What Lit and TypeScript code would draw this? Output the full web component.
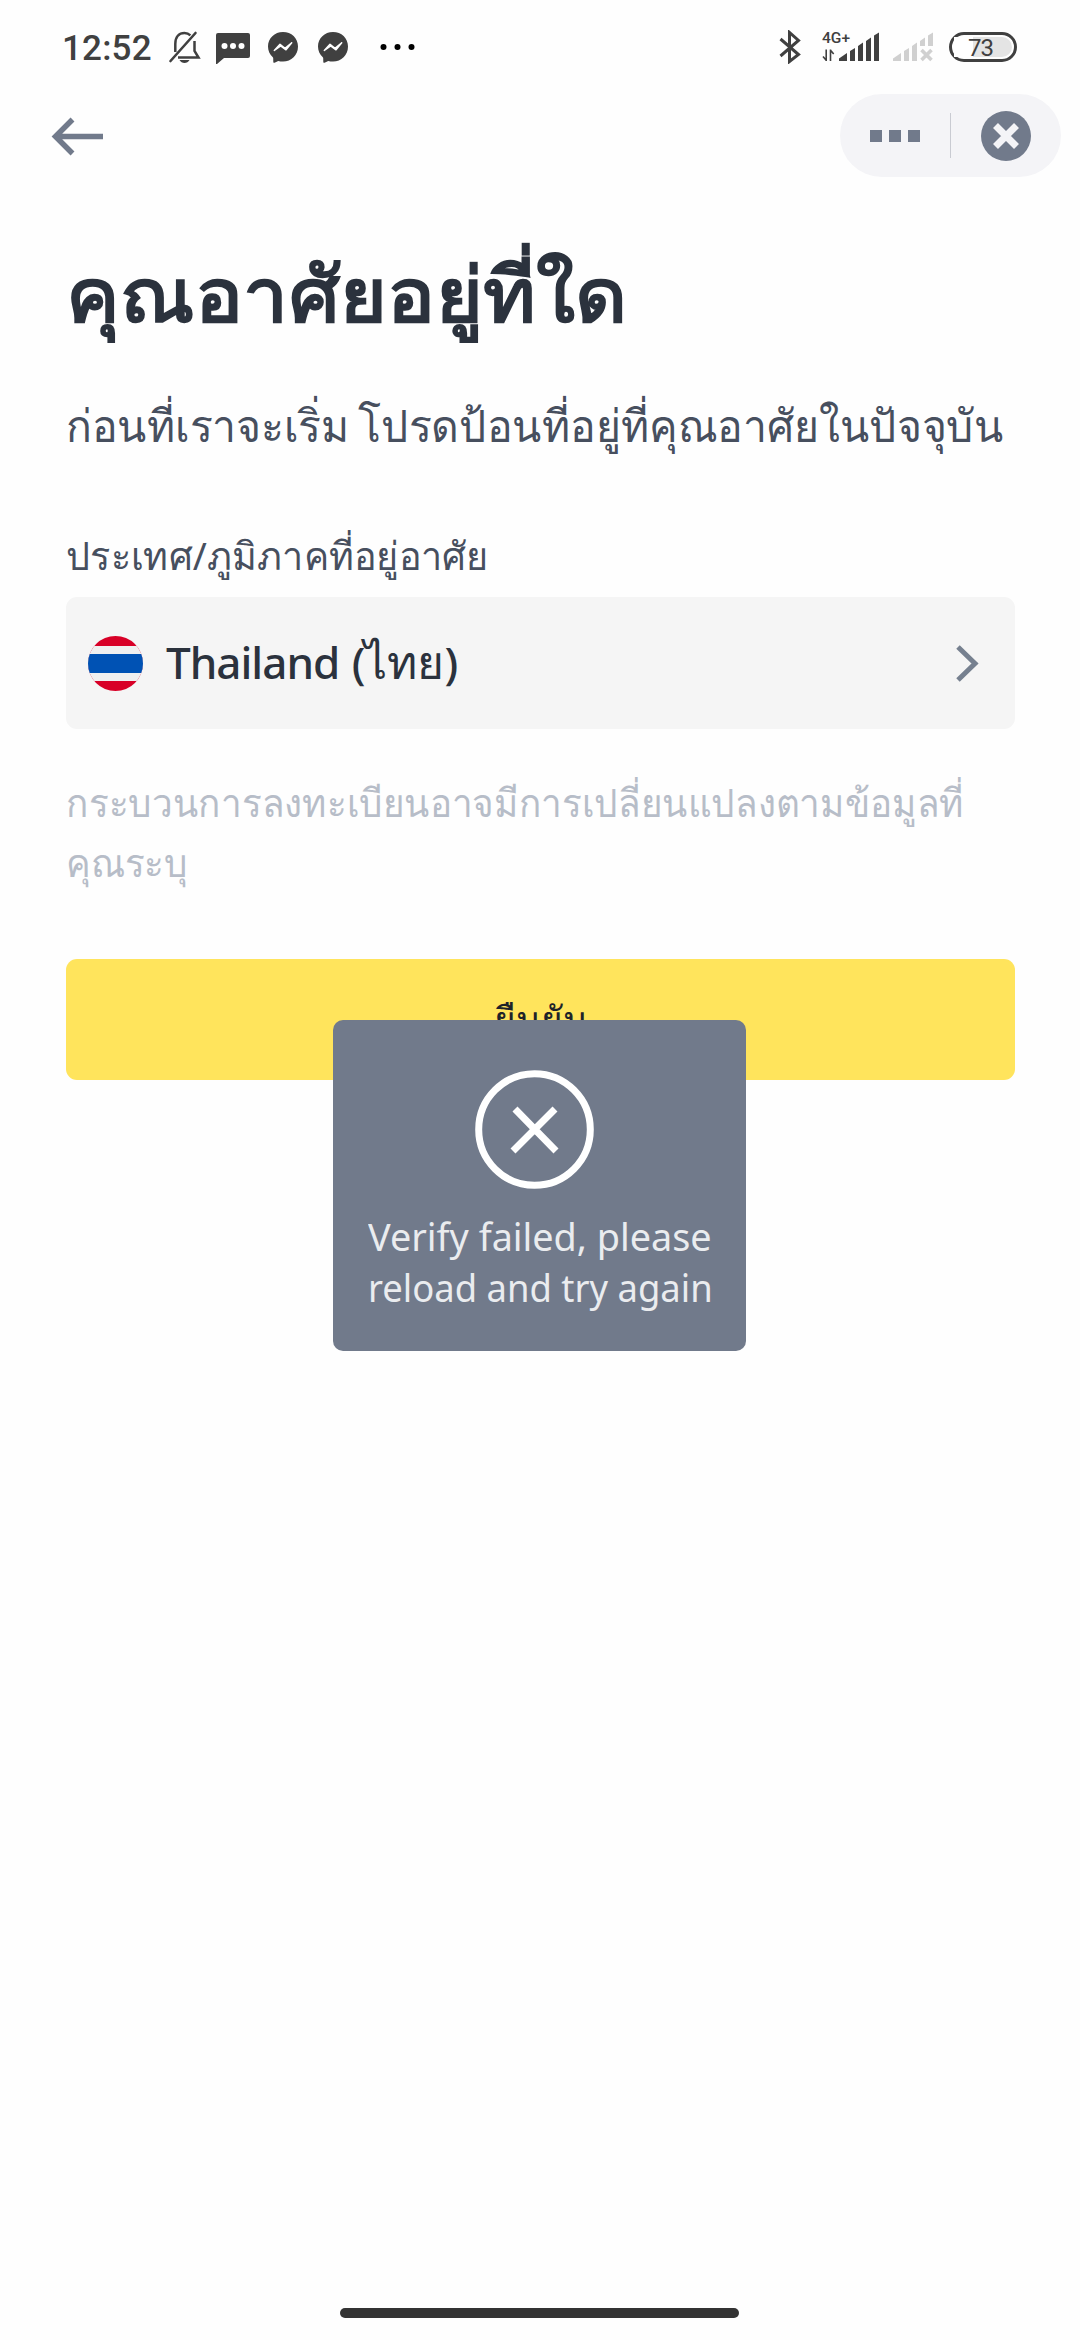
import { LitElement, html, css, svg } from "lit";
import { customElement } from "lit/decorators.js";

const messenger = () => html`
  <svg class="messenger" width="30" height="31" viewBox="0 0 30 31">
    <path fill="#404040" d="M15 0C6.600 0 0 6.200 0 14.600c0 4.300 1.800 8.100 4.800 10.700.3.300.4.600.4 1l.1 3.600c0 .7.700 1.100 1.300.8l3.600-1.700c1.500.4 3.100.6 4.800.6 8.400 0 15-6.300 15-15S23.400 0 15 0Z"/>
    <path d="M6.300 18.400 12 12.300l5 4.100 6.700-5.600-5.700 7-5.300-3.900Z" fill="#fff" stroke="#fff" stroke-width="1.500" stroke-linejoin="round"/>
  </svg>`;

@customElement("status-bar")
export class StatusBar extends LitElement {
  static styles = css`
    :host { display: flex; align-items: center; height: 94px; box-sizing: border-box; padding: 0 63px 0 62px; font-family: Roboto, "Noto Sans", sans-serif; color: #404040; }
    svg { display: block; flex: none; }
    .time { font-size: 35px; line-height: 40px; font-weight: 500; width: 106px; letter-spacing: 0.2px; white-space: nowrap; margin-top: 3px; }
    .bell { margin-right: 15px; }
    .chat { margin: 2px 18px 0 0; }
    .messenger { margin-right: 20px; }
    .more { margin-left: 12px; }
    .right { display: flex; align-items: center; margin-left: auto; }
    .bluetooth { margin-right: 20px; }
    .network { width: 58px; height: 32px; margin-right: 12px; overflow: visible; }
    .tag { font: 500 15px Roboto, sans-serif; }
    .sim { margin-right: 16px; }
    .battery { box-sizing: border-box; width: 68px; height: 30px; border: 3px solid #404040; border-radius: 15px; display: flex; padding: 2px; font-size: 24px; line-height: 24px; letter-spacing: -1px; }
    .level { box-sizing: border-box; width: 58px; height: 20px; border-radius: 0 10px 10px 0; background: linear-gradient(90deg, #fff 19px, #e4e4e4 19px); padding-left: 14px; line-height: 22px; }
  `;
  render() {
    return html`
      <span class="time">12:52</span>
      <svg class="bell" width="33" height="34" viewBox="0 0 33 34" fill="none" stroke="#404040">
        <path d="M27.500 3 2.500 31" stroke-width="2.600" stroke-linecap="round"/>
        <path d="M7.300 22V14C7.300 7 11 3 16.500 3c2.500 0 4.400.9 5.900 2.300M26.500 11V21l4 6.500H10" stroke-width="2.500"/>
        <path d="M11.500 30h10c-1 2-3 2.900-5 2.900s-4-.9-5-2.900Z" fill="#404040" stroke="none"/>
      </svg>
      <svg class="chat" width="34" height="31" viewBox="0 0 34 31">
        <path fill="#404040" d="M2 0h30q2 0 2 2v21q0 2-2 2H8L1 31H0V2q0-2 2-2Z"/>
        <circle cx="8.500" cy="13" r="3" fill="#fff"/><circle cx="17" cy="13" r="3" fill="#fff"/><circle cx="25.500" cy="13" r="3" fill="#fff"/>
      </svg>
      ${messenger()}${messenger()}
      <svg class="more" width="36" height="8" viewBox="0 0 36 8">
        <circle cx="3.500" cy="4" r="3"/><circle cx="17.500" cy="4" r="3"/><circle cx="31.500" cy="4" r="3"/>
      </svg>
      <div class="right">
        <svg class="bluetooth" width="22" height="34" viewBox="0 0 22 34" fill="none" stroke="#404040" stroke-width="3">
          <path d="M1.500 9 19.500 24.500 10.500 31.500V2.500l9 8L1.500 26"/>
        </svg>
        <svg class="network" viewBox="0 0 58 32" fill="#404040">
          <text class="tag" x="1" y="12" textLength="28" lengthAdjust="spacingAndGlyphs">4G+</text>
          <path d="M5.200 30V18.500M5.200 29.300 2 25.500M9.500 30V18.500M9.500 19.200l3.200 3.800" fill="none" stroke="#404040" stroke-width="1.600"/>
          <path d="M18 30v-2.500l8-5.500v8ZM29 30V20l5-3v13ZM37 30V15l5-3.500V30ZM45 30V10l5-3.500V30ZM53 30V4.500l5-3V30Z"/>
        </svg>
        <svg class="sim" width="42" height="32" viewBox="0 0 42 32" fill="#d0d0d0">
          <path d="M2 30v-2.500l8-5.500v8ZM13 30V20l5-3v13ZM21 30V15l5-3.500V30ZM29 15V10l5-3.500V15ZM37 15V4.500l5-3V15Z"/>
          <path d="m30.500 19 10 10M40.500 19l-10 10" stroke="#d0d0d0" stroke-width="3.600"/>
        </svg>
        <div class="battery"><div class="level">73</div></div>
      </div>`;
  }
}

@customElement("nav-bar")
export class NavBar extends LitElement {
  static styles = css`
    :host { display: flex; justify-content: space-between; height: 83px; padding: 0 19px 0 50px; }
    svg { display: block; }
    .back { align-self: center; }
    .capsule { display: flex; align-items: center; width: 221px; height: 83px; border-radius: 42px; background: #f4f4f7; box-sizing: border-box; padding: 0 30px; }
    .dots { display: flex; gap: 7px; width: 80px; }
    .dot { width: 12px; height: 12px; background: #717a8b; }
    .rule { width: 1px; height: 45px; background: #c9cbd2; }
    .close { margin-left: 30px; }
  `;
  render() {
    return html`
      <svg class="back" width="54" height="40" viewBox="0 0 54 40" fill="none" stroke="#717a8b" stroke-width="5.500">
        <path d="M53 20.500H6M22.500 3.500 5.500 20.500l17 17"/>
      </svg>
      <div class="capsule">
        <div class="dots"><div class="dot"></div><div class="dot"></div><div class="dot"></div></div>
        <div class="rule"></div>
        <svg class="close" width="50" height="50" viewBox="0 0 50 50">
          <circle cx="25" cy="25" r="25" fill="#717a8b"/>
          <path d="m14.500 14.500 21 21m0-21-21 21" stroke="#f4f4f7" stroke-width="7"/>
        </svg>
      </div>`;
  }
}

@customElement("app-toast")
export class AppToast extends LitElement {
  static styles = css`
    :host { display: flex; flex-direction: column; box-sizing: border-box; width: 413px; height: 331px; border-radius: 10px; background: #717a8b; padding: 50px 35px 0; font-family: "Noto Sans", sans-serif; color: #eaecef; }
    .icon { display: block; margin-left: 107px; flex: none; }
    .message { margin-top: 22px; font-size: 38px; line-height: 51px; white-space: nowrap; }
    .line { display: block; transform-origin: 0 50%; }
    .first { transform: scaleX(0.994); }
    .second { transform: scaleX(0.958); }
  `;
  render() {
    return html`
      <svg class="icon" width="119" height="119" viewBox="0 0 119 119" fill="none" stroke="#fff">
        <circle cx="59.500" cy="59.500" r="55.800" stroke-width="7"/>
        <path d="m40 39 41 42M80 39 38 81" stroke-width="7"/>
      </svg>
      <div class="message"><span class="line first">Verify failed, please</span><span class="line second">reload and try again</span></div>`;
  }
}

@customElement("app-root")
export class AppRoot extends LitElement {
  static styles = css`
    :host { display: flex; flex-direction: column; position: relative; width: 1080px; height: 2340px; background: #fefefe; overflow: hidden; font-family: "Noto Sans", sans-serif; color: #2b323d; }
    .content { display: flex; flex-direction: column; padding: 0 65px 0 66px; white-space: nowrap; }
    .fit { display: inline-block; transform-origin: 0 50%; }
    .title { margin: 61px 0 0; height: 112px; font-size: 76px; line-height: 110px; font-weight: 700; }
    .title .fit { transform: scaleX(1.056); }
    .intro { margin: 40px 0 0; height: 70px; font-size: 45px; line-height: 70px; color: #474f5e; }
    .intro .fit { transform: scaleX(0.95); word-spacing: -2px; }
    .label { margin-top: 65px; height: 63px; font-size: 39px; line-height: 60px; color: #474f5e; }
    .label .fit { transform: scaleX(0.968); }
    .select { display: flex; align-items: center; margin-top: 9px; height: 132px; border-radius: 11px; background: #f5f5f5; padding: 0 36px 0 22px; box-sizing: border-box; }
    .country { margin: 0 0 4px 23px; font-size: 44px; line-height: 60px; font-weight: 500; letter-spacing: -1px; word-spacing: 2px; }
    .native { font-size: 46px; font-weight: 400; letter-spacing: 0; }
    .chevron { margin-left: auto; }
    .hint { margin: 43px 0 0; height: 122px; font-size: 39px; line-height: 60px; color: #b7bdc8; }
    .line { display: block; transform-origin: 0 50%; transform: scaleX(0.945); }
    .confirm { border: 0; margin-top: 65px; height: 121px; border-radius: 11px; background: #ffe45c; font: 500 37px "Noto Sans", sans-serif; color: #1e2329; }
    .toast { position: absolute; left: 333px; top: 1020px; }
    .home { width: 399px; height: 10px; border-radius: 5px; background: #333; margin: auto auto 22px 340px; }
  `;
  render() {
    return html`
      <status-bar></status-bar>
      <nav-bar></nav-bar>
      <main class="content">
        <h1 class="title"><span class="fit">คุณอาศัยอยู่ที่ใด</span></h1>
        <p class="intro"><span class="fit">ก่อนที่เราจะเริ่ม โปรดป้อนที่อยู่ที่คุณอาศัยในปัจจุบัน</span></p>
        <div class="label"><span class="fit">ประเทศ/ภูมิภาคที่อยู่อาศัย</span></div>
        <div class="select">
          <svg class="flag" width="55" height="55" viewBox="0 0 55 55">
            <defs><clipPath id="disc"><circle cx="27.500" cy="27.500" r="27.500"/></clipPath></defs>
            <g clip-path="url(#disc)">${[["#d80027", 0, 55], ["#f0f0f0", 10, 35], ["#0052b4", 18, 19]].map(
              ([fill, y, h]) => svg`<rect width="55" y=${y} height=${h} fill=${fill}/>`
            )}</g>
          </svg>
          <span class="country">Thailand (<span class="native">ไทย</span>)</span>
          <svg class="chevron" width="24" height="38" viewBox="0 0 24 38" fill="none" stroke="#76808f" stroke-width="5">
            <path d="m3 3 17 16.500L3 36"/>
          </svg>
        </div>
        <p class="hint"><span class="line">กระบวนการลงทะเบียนอาจมีการเปลี่ยนแปลงตามข้อมูลที่</span><span class="line">คุณระบุ</span></p>
        <button class="confirm">ยืนยัน</button>
      </main>
      <div class="home"></div>
      <app-toast class="toast"></app-toast>`;
  }
}
